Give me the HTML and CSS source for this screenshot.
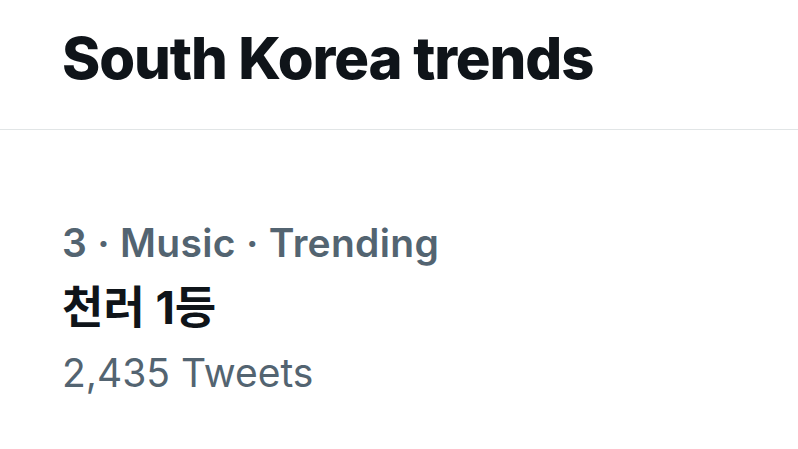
FILE: index.html
```html
<!DOCTYPE html>
<html lang="ko">
<head>
    <meta charset="UTF-8">
    <meta name="viewport" content="width=device-width, initial-scale=1.0">
    <title>South Korea trends</title>
    <link rel="stylesheet" href="styles.css">
</head>
<body>
    <div id="trends">
        <h1 class="title">South Korea trends</h1>
        <div class="trend">
            <div class="meta">3 · Music · Trending</div>
            <div class="name">천러 1등</div>
            <div class="count">2,435 Tweets</div>
        </div>
    </div>
</body>
</html>
```

FILE: styles.css
```css
body {
    margin: 0;
    background-color: #fff;
    font-family: Inter, "Noto Sans CJK KR", sans-serif;
    color: #0f1419;
}

#trends {
    width: 798px;
}

.title {
    margin: 0;
    padding: 20px 0 0 62px;
    height: 130px;
    box-sizing: border-box;
    border-bottom: 1px solid #e1e5e6;
    font-size: 58px;
    font-weight: 800;
    letter-spacing: -1.1px;
    line-height: 76px;
}

.trend {
    padding: 89px 0 0 62px;
}

.meta {
    color: #536471;
    font-size: 39px;
    font-weight: 600;
    letter-spacing: 0.3px;
    line-height: 48px;
}

.name {
    margin-top: 17px;
    font-size: 45px;
    font-weight: 700;
    line-height: 48px;
}

.count {
    margin-top: 17px;
    color: #536471;
    font-size: 39px;
    line-height: 48px;
}
```
